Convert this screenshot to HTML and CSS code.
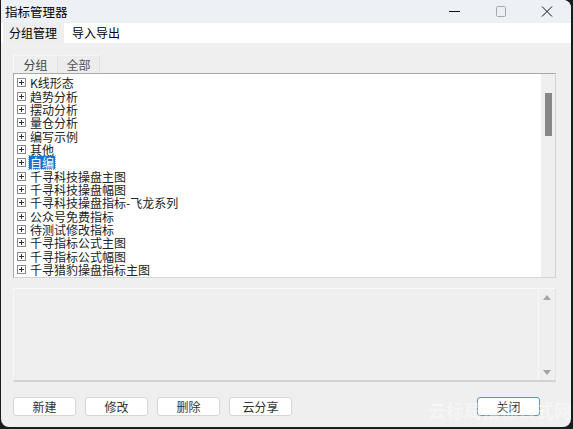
FILE: index.html
```html
<!DOCTYPE html>
<html lang="zh-CN">
<head>
    <meta charset="UTF-8">
    <title>指标管理器</title>
    <link rel="stylesheet" href="styles.css">
</head>
<body>
    <div class="window">
        <!-- Title bar -->
        <div class="titlebar">
            <div class="title">指标管理器</div>
            <div class="controls">
                <svg class="ctl" width="46" height="23" viewBox="0 0 46 23"><path d="M17 11.5h11" stroke="#111" stroke-width="1"/></svg>
                <svg class="ctl" width="46" height="23" viewBox="0 0 46 23"><rect x="18.5" y="6.5" width="9" height="10" rx="1" fill="none" stroke="#a8a8a8"/></svg>
                <svg class="ctl" width="46" height="23" viewBox="0 0 46 23"><path d="M18 6.5l10 10M28 6.5l-10 10" stroke="#111" stroke-width="1"/></svg>
            </div>
        </div>

        <!-- Menu bar -->
        <div class="menubar">
            <div class="menu-item active">分组管理</div>
            <div class="menu-item">导入导出</div>
        </div>

        <div class="client">
            <div class="tabs">
                <div class="tab selected">分组</div>
                <div class="tab">全部</div>
            </div>

            <div class="tree">
                <ul class="tree-list">
                    <li><span class="plus"></span><span class="label">K线形态</span></li>
                    <li><span class="plus"></span><span class="label">趋势分析</span></li>
                    <li><span class="plus"></span><span class="label">摆动分析</span></li>
                    <li><span class="plus"></span><span class="label">量仓分析</span></li>
                    <li><span class="plus"></span><span class="label">编写示例</span></li>
                    <li><span class="plus"></span><span class="label">其他</span></li>
                    <li><span class="plus"></span><span class="label current">自编</span></li>
                    <li><span class="plus"></span><span class="label">千寻科技操盘主图</span></li>
                    <li><span class="plus"></span><span class="label">千寻科技操盘幅图</span></li>
                    <li><span class="plus"></span><span class="label">千寻科技操盘指标-飞龙系列</span></li>
                    <li><span class="plus"></span><span class="label">公众号免费指标</span></li>
                    <li><span class="plus"></span><span class="label">待测试修改指标</span></li>
                    <li><span class="plus"></span><span class="label">千寻指标公式主图</span></li>
                    <li><span class="plus"></span><span class="label">千寻指标公式幅图</span></li>
                    <li><span class="plus"></span><span class="label">千寻猎豹操盘指标主图</span></li>
                </ul>
                <div class="vscroll">
                    <div class="thumb"></div>
                </div>
            </div>

            <!-- Description box -->
            <div class="info">
                <div class="info-body"></div>
                <div class="info-scroll">
                    <span class="arrow up"></span>
                    <span class="arrow down"></span>
                </div>
            </div>

            <div class="buttons">
                <button class="btn">新建</button>
                <button class="btn">修改</button>
                <button class="btn">删除</button>
                <button class="btn">云分享</button>
                <button class="btn focus close-btn">关闭</button>
            </div>
        </div>

        <div class="watermark">云标局指标公式网</div>
    </div>
</body>
</html>
```

FILE: styles.css
```css
html, body {
    margin: 0;
    padding: 0;
    background: #1c1c1c;
}
body {
    width: 573px;
    height: 429px;
    overflow: hidden;
    font-family: "Noto Sans CJK SC", "Noto Sans", sans-serif;
}
.window {
    position: relative;
    margin-left: 1px;
    width: 570px;
    height: 427px;
    background: #efefef;
    border-radius: 0 8px 8px 8px;
    overflow: hidden;
    display: flex;
    flex-direction: column;
}

/* title bar */
.titlebar {
    height: 23px;
    background: #edf1f6;
    display: flex;
    align-items: center;
    justify-content: space-between;
}
.title {
    padding-left: 4px;
    font-size: 12.5px;
    color: #000;
    line-height: 23px;
}
.controls {
    display: flex;
    padding-right: 1px;
}
.ctl {
    display: block;
}

/* menu bar */
.menubar {
    height: 20px;
    background: #fff;
    display: flex;
    font-size: 12px;
    color: #000;
}
.menu-item {
    padding: 0 7px 0 8px;
    line-height: 20px;
}
.menu-item.active {
    background: #eeeeee;
    margin-left: 2px;
    padding: 0 7px 0 6px;
}

.client {
    flex: 1;
    padding: 12px 15px 0 12px;
    display: flex;
    flex-direction: column;
}

/* tabs */
.tabs {
    display: flex;
    height: 18px;
}
.tab {
    width: 42px;
    height: 18px;
    line-height: 18px;
    text-align: center;
    font-size: 12px;
    color: #555;
    background: #ececec;
    border-top: 1px solid #f6f6f6;
    border-right: 1px solid #e2e2e2;
    box-sizing: border-box;
}
.tab.selected {
    width: 45px;
    background: #efefef;
    border-left: 1px solid #fafafa;
    color: #444;
}

/* tree */
.tree {
    height: 205px;
    background: #fff;
    border: 1px solid #a8a8a8;
    border-right-color: #d0d0d0;
    border-bottom-color: #d4d4d4;
    box-sizing: border-box;
    display: flex;
    overflow: hidden;
}
.tree-list {
    list-style: none;
    margin: 0;
    padding: 2px 0 0 3px;
    flex: 1;
    font-size: 12px;
    color: #222;
}
.tree-list li {
    height: 13.35px;
    line-height: 13px;
    display: flex;
    align-items: center;
    white-space: nowrap;
}
.plus {
    width: 9px;
    height: 9px;
    border: 1px solid #8a8a8a;
    box-sizing: border-box;
    margin-right: 3px;
    position: relative;
    flex: none;
}
.plus::before, .plus::after {
    content: "";
    position: absolute;
    background: #333;
}
.plus::before {
    left: 1px;
    top: 3px;
    width: 5px;
    height: 1px;
}
.plus::after {
    left: 3px;
    top: 1px;
    width: 1px;
    height: 5px;
}
.label {
    display: block;
    height: 13px;
    line-height: 13px;
    padding: 0 1px;
}
.label.current {
    background: #1874d4;
    color: #fff;
    outline: 1px dotted #7ab0e8;
}
.vscroll {
    width: 14px;
    background: #efefef;
    position: relative;
}
.thumb {
    position: absolute;
    left: 4px;
    top: 19px;
    width: 7px;
    height: 43px;
    background: #878787;
}

/* description box */
.info {
    margin-top: 10px;
    height: 94px;
    border: 1px solid #f8f8f8;
    border-bottom: 2px solid #d2d2d2;
    border-right-color: #e4e4e4;
    box-sizing: border-box;
    display: flex;
}
.info-body {
    flex: 1;
}
.info-scroll {
    width: 16px;
    border-left: 1px solid #f8f8f8;
    display: flex;
    flex-direction: column;
    justify-content: space-between;
    align-items: center;
    padding: 6px 0 5px;
}
.arrow {
    width: 0;
    height: 0;
    border-left: 4px solid transparent;
    border-right: 4px solid transparent;
}
.arrow.up {
    border-bottom: 5px solid #a4a4a4;
}
.arrow.down {
    border-top: 5px solid #a4a4a4;
}

/* buttons */
.buttons {
    margin-top: 15px;
    display: flex;
    gap: 9px;
}
.btn {
    width: 63px;
    height: 19px;
    padding: 0;
    background: #fff;
    border: 1px solid #d6d6d6;
    border-radius: 3px;
    font-family: "Noto Sans CJK SC", "Noto Sans", sans-serif;
    font-size: 12px;
    color: #333;
    line-height: 17px;
}
.close-btn {
    margin-left: auto;
    margin-right: 16px;
}
.btn.focus {
    border-color: #4a9be4;
}

.watermark {
    position: absolute;
    left: 427px;
    top: 397px;
    font-size: 18px;
    font-weight: bold;
    color: rgba(255, 255, 255, 0.4);
    white-space: nowrap;
}
```
